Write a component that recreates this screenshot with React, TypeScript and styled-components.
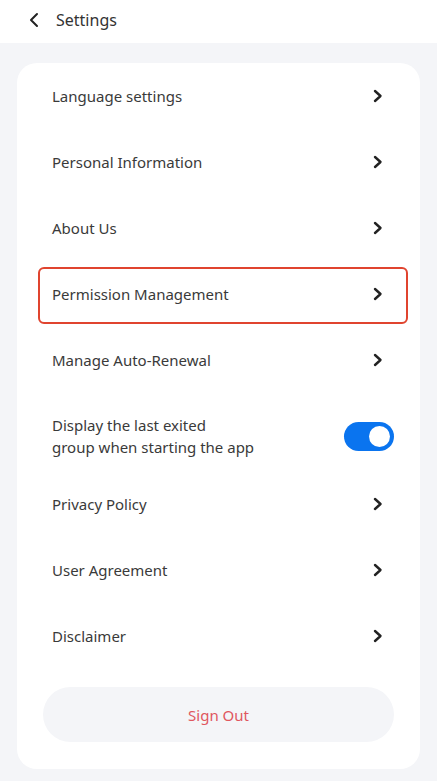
import React, { useState } from "react";
import styled, { createGlobalStyle } from "styled-components";

const GlobalStyle = createGlobalStyle`
    html, body {
        margin: 0;
        padding: 0;
        background: #f4f5f8;
        font-family: "Noto Sans", "Open Sans", sans-serif;
    }
    * {
        box-sizing: border-box;
    }
`;

const Page = styled.div`
    width: 437px;
    min-height: 781px;
    background: #f4f5f8;
`;

const Header = styled.div`
    height: 43px;
    background: #ffffff;
    display: flex;
    align-items: center;
    padding: 0 0 4px 27px;
    gap: 15px;
`;

const Title = styled.span`
    font-size: 16px;
    color: #333333;
`;

const Card = styled.div`
    margin: 20px 17px 0;
    background: #ffffff;
    border-radius: 20px;
    padding: 0 22px 27px;
`;

const Row = styled.div<{ $tall?: boolean; $active?: boolean }>`
    height: ${(p) => (p.$tall ? 78 : 66)}px;
    display: flex;
    align-items: center;
    justify-content: space-between;
    padding: ${(p) => (p.$tall ? "8px" : "0")} 14px 0 13px;
    position: relative;

    /* highlight frame drawn over the row */
    &::before {
        content: "";
        display: ${(p) => (p.$active ? "block" : "none")};
        position: absolute;
        top: 6px;
        bottom: 3px;
        left: -1px;
        right: -10px;
        border: 2px solid #e0442f;
        border-radius: 6px;
    }
`;

const Label = styled.span`
    font-size: 15px;
    line-height: 22px;
    color: #3a3a3a;
`;

const Toggle = styled.button<{ $on: boolean }>`
    width: 50px;
    height: 29px;
    border-radius: 15px;
    border: none;
    padding: 0;
    background: ${(p) => (p.$on ? "#0a74ef" : "#d0d3da")};
    position: relative;
    cursor: pointer;
    margin-right: -10px;
    &::after {
        content: "";
        position: absolute;
        top: 4px;
        left: ${(p) => (p.$on ? 25 : 4)}px;
        width: 21px;
        height: 21px;
        border-radius: 50%;
        background: #ffffff;
    }
`;

const SignOut = styled.button`
    display: block;
    width: 351px;
    height: 55px;
    margin: 18px 0 0 4px;
    border: none;
    border-radius: 28px;
    background: #f4f5f8;
    color: #e0575f;
    font-family: "Noto Sans", "Open Sans", sans-serif;
    font-size: 15px;
    cursor: pointer;
`;

const Chevron = ({ dir = "right" }: { dir?: "left" | "right" }) =>
    dir === "right" ? (
        <svg width="12" height="14" viewBox="0 0 12 14">
            <path d="M3 2 L8.5 7 L3 12" fill="none" stroke="#222" strokeWidth="2.4" strokeLinecap="round" strokeLinejoin="round" />
        </svg>
    ) : (
        <svg width="14" height="16" viewBox="0 0 14 16">
            <path d="M10 2 L4 8 L10 14" fill="none" stroke="#222" strokeWidth="2" strokeLinecap="round" strokeLinejoin="round" />
        </svg>
    );

const items = [
    "Language settings",
    "Personal Information",
    "About Us",
    "Permission Management",
    "Manage Auto-Renewal",
];

const items2 = ["Privacy Policy", "User Agreement", "Disclaimer"];

export default function App() {
    const [on, setOn] = useState(true);

    return (
        <Page>
            <GlobalStyle />
            <Header>
                <Chevron dir="left" />
                <Title>Settings</Title>
            </Header>
            <Card>
                {items.map((t) => (
                    <Row key={t} $active={t === "Permission Management"}>
                        <Label>{t}</Label>
                        <Chevron />
                    </Row>
                ))}
                <Row $tall>
                    <Label>
                        Display the last exited
                        <br />
                        group when starting the app
                    </Label>
                    <Toggle $on={on} onClick={() => setOn(!on)} />
                </Row>
                {items2.map((t) => (
                    <Row key={t}>
                        <Label>{t}</Label>
                        <Chevron />
                    </Row>
                ))}
                <SignOut>Sign Out</SignOut>
            </Card>
        </Page>
    );
}
